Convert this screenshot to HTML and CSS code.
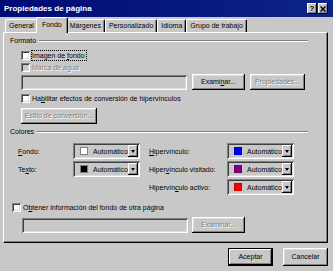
FILE: index.html
```html
<!DOCTYPE html>
<html lang="es">
<head>
<meta charset="utf-8">
<title>Propiedades de página</title>
<link rel="stylesheet" href="styles.css">
</head>
<body>
<div class="dialog">
  <header class="titlebar">
    <span class="title">Propiedades de página</span>
    <div class="caption-btns">
      <span class="cbtn help">?</span>
      <span class="cbtn close"><svg width="6" height="6" viewBox="0 0 6 6"><path d="M0.5 0.5L5.5 5.5M5.5 0.5L0.5 5.5" stroke="#000" stroke-width="1.5"/></svg></span>
    </div>
  </header>

  <nav class="tabs">
    <span class="tab">General</span>
    <span class="tab active">Fondo</span>
    <span class="tab">Márgenes</span>
    <span class="tab">Personalizado</span>
    <span class="tab">Idioma</span>
    <span class="tab">Grupo de trabajo</span>
  </nav>

  <section class="panel">
    <div class="group-head"><span>Formato</span><i class="rule"></i></div>

    <div class="check-row indent first">
      <span class="box"></span><span class="lbl focus">Imagen de <u>f</u>ondo</span>
    </div>
    <div class="check-row indent disabled">
      <span class="box dis"></span><span class="lbl">Marca de agua</span>
    </div>

    <div class="field-row indent top-field">
      <span class="field f-top"></span>
      <span class="btn b-exam">Exami<u>n</u>ar...</span>
      <span class="btn b-prop disabled">Propiedades...</span>
    </div>

    <div class="check-row indent habil">
      <span class="box"></span><span class="lbl">Ha<u>b</u>ilitar efectos de conversión de hipervínculos</span>
    </div>

    <div class="btn-row indent">
      <span class="btn b-estilo disabled">Estilo de conversión...</span>
    </div>

    <div class="group-head colores-head"><span>Colores</span><i class="rule"></i></div>

    <div class="colors">
      <span class="clabel"><u>F</u>ondo:</span>
      <span class="combo"><i class="sw sw-white"></i><span class="ctext">Automático</span><b class="drop"><i class="arrow"></i></b></span>
      <span class="clabel c2"><u>H</u>ipervínculo:</span>
      <span class="combo"><i class="sw sw-blue"></i><span class="ctext">Automático</span><b class="drop"><i class="arrow"></i></b></span>

      <span class="clabel">Te<u>x</u>to:</span>
      <span class="combo"><i class="sw sw-black"></i><span class="ctext">Automático</span><b class="drop"><i class="arrow"></i></b></span>
      <span class="clabel c2">Hiper<u>v</u>ínculo visitado:</span>
      <span class="combo"><i class="sw sw-purple"></i><span class="ctext">Automático</span><b class="drop"><i class="arrow"></i></b></span>

      <span class="clabel empty"></span>
      <span class="clabel empty"></span>
      <span class="clabel c2">Hipervín<u>c</u>ulo activo:</span>
      <span class="combo"><i class="sw sw-red"></i><span class="ctext">Automático</span><b class="drop"><i class="arrow"></i></b></span>
    </div>

    <div class="check-row obtener">
      <span class="box"></span><span class="lbl">O<u>b</u>tener información del fondo de otra página</span>
    </div>

    <div class="field-row bottom-field">
      <span class="field f-bottom"></span>
      <span class="btn b-exam2 disabled">Examinar...</span>
    </div>
  </section>

  <footer class="actions">
    <span class="btn dlg default">Aceptar</span>
    <span class="btn dlg">Cancelar</span>
  </footer>
</div>
</body>
</html>
```

FILE: styles.css
```css
html, body {
  margin: 0;
  padding: 0;
}

body {
  width: 333px;
  height: 271px;
  overflow: hidden;
  background: #c8c8c8;
  font-family: "Liberation Sans", Arial, sans-serif;
  font-size: 7px;
  color: #000;
}

.dialog {
  display: flex;
  flex-direction: column;
  width: 333px;
  height: 271px;
}

/* title bar */
.titlebar {
  height: 17px;
  flex: none;
  display: flex;
  align-items: center;
  justify-content: space-between;
  padding: 0 5px 0 4px;
  box-sizing: border-box;
  background: linear-gradient(90deg, #000a74, #0c2488);
  color: #fff;
}

.title {
  font-weight: bold;
  font-size: 8px;
  line-height: 10px;
}

.caption-btns {
  display: flex;
  gap: 1px;
}

.cbtn {
  width: 10px;
  height: 11px;
  box-sizing: border-box;
  background: #c8c8c8;
  box-shadow: inset -1px -1px #000, inset 1px 1px #fff, inset -2px -2px #808080;
  display: flex;
  align-items: center;
  justify-content: center;
  color: #000;
  font-weight: bold;
  font-size: 8px;
  line-height: 9px;
}

/* tabs */
.tabs {
  height: 15px;
  flex: none;
  display: flex;
  align-items: flex-end;
  padding-left: 5px;
  position: relative;
  z-index: 2;
}

.tab {
  height: 13px;
  box-sizing: border-box;
  padding: 0 3px;
  border-top: 1px solid #fff;
  border-left: 1px solid #fff;
  border-right: 1px solid #000;
  border-radius: 2px 2px 0 0;
  box-shadow: inset -1px 0 #808080;
  line-height: 12px;
  white-space: nowrap;
}

.tab.active {
  height: 16px;
  margin: 0 -2px -1px;
  padding: 0 5px;
  background: #c8c8c8;
  line-height: 13px;
  position: relative;
  z-index: 3;
}

/* panel */
.panel {
  height: 211px;
  flex: none;
  box-sizing: border-box;
  margin: 0 5px 0 3px;
  border-top: 1px solid #fff;
  border-left: 1px solid #fff;
  border-right: 1px solid #000;
  border-bottom: 1px solid #000;
  box-shadow: inset -1px -1px #808080;
  padding: 0 19px 0 6px;
  display: flex;
  flex-direction: column;
  position: relative;
  z-index: 1;
}

.group-head {
  margin-top: 3px;
  height: 10px;
  display: flex;
  align-items: center;
  line-height: 10px;
}

.group-head .rule {
  flex: 1;
  height: 0;
  margin-left: 3px;
  border-top: 1px solid #808080;
  border-bottom: 1px solid #fff;
}

.colores-head {
  margin-top: 3px;
}

.indent {
  margin-left: 11px;
}

.check-row {
  height: 11px;
  display: flex;
  align-items: center;
  line-height: 9px;
  white-space: nowrap;
}

.check-row.first {
  margin-top: 4px;
}

.check-row.disabled {
  margin-top: 1px;
}

.check-row.habil {
  margin-top: 3px;
}

.check-row.obtener {
  margin-top: 7px;
  margin-left: 2px;
}

.box {
  width: 9px;
  height: 9px;
  flex: none;
  box-sizing: border-box;
  background: #fff;
  box-shadow: inset 1px 1px #808080, inset -1px -1px #fff, inset 2px 2px #404040, inset -2px -2px #dcdcdc;
  margin-right: 1px;
}

.box.dis {
  background: #c8c8c8;
}

.lbl {
  border: 1px solid transparent;
  padding-right: 1px;
}

.lbl.focus {
  border: 1px dotted #000;
}

.disabled {
  color: #808080;
  text-shadow: 1px 1px 0 #fff;
}

u {
  text-decoration: underline;
  text-underline-offset: 1px;
}

/* fields and buttons */
.field-row {
  display: flex;
  align-items: center;
  height: 16px;
}

.top-field {
  margin-top: 1px;
}

.bottom-field {
  margin-top: 4px;
  margin-left: 12px;
}

.field {
  height: 15px;
  box-sizing: border-box;
  background: #c8c8c8;
  box-shadow: inset 1px 1px #808080, inset -1px -1px #fff, inset 2px 2px #404040, inset -2px -2px #dcdcdc;
}

.f-top {
  width: 166px;
  margin-right: 5px;
}

.f-bottom {
  width: 166px;
  margin-right: 4px;
}

.btn {
  height: 16px;
  box-sizing: border-box;
  display: flex;
  align-items: center;
  justify-content: center;
  background: #c8c8c8;
  box-shadow: inset -1px -1px #000, inset 1px 1px #fff, inset -2px -2px #808080, inset 2px 2px #dcdcdc;
  white-space: nowrap;
  line-height: 10px;
}

.b-exam,
.b-exam2 {
  width: 53px;
}

.b-prop {
  width: 55px;
  margin-left: 5px;
}

.btn-row {
  margin-top: 4px;
  display: flex;
}

.b-estilo {
  width: 76px;
}

/* colours grid */
.colors {
  margin-top: 6px;
  margin-left: 8px;
  display: grid;
  grid-template-columns: 55px 67px 87px 67px;
  grid-auto-rows: 16px;
  row-gap: 2px;
}

.clabel {
  display: flex;
  align-items: center;
  line-height: 9px;
  white-space: nowrap;
}

.clabel.c2 {
  padding-left: 9px;
}

.combo {
  position: relative;
  display: flex;
  align-items: center;
  box-sizing: border-box;
  padding: 2px 2px 2px 7px;
  background: #c8c8c8;
  box-shadow: inset 1px 1px #808080, inset -1px -1px #fff, inset 2px 2px #404040, inset -2px -2px #dcdcdc;
}

.sw {
  width: 8px;
  height: 8px;
  flex: none;
  box-sizing: border-box;
  border: 1px solid #808080;
}

.sw-white { background: #fff; }
.sw-black { background: #000; }
.sw-blue { background: #0000ff; border-color: #0000c0; }
.sw-purple { background: #800080; border-color: #700070; }
.sw-red { background: #ff0000; border-color: #d00000; }

.ctext {
  flex: 1;
  margin-left: 5px;
  line-height: 9px;
  white-space: nowrap;
}

.drop {
  width: 10px;
  height: 12px;
  flex: none;
  box-sizing: border-box;
  background: #c8c8c8;
  box-shadow: inset -1px -1px #000, inset 1px 1px #fff, inset -2px -2px #808080;
  display: flex;
  align-items: center;
  justify-content: center;
}

.arrow {
  width: 0;
  height: 0;
  border-left: 2.5px solid transparent;
  border-right: 2.5px solid transparent;
  border-top: 3px solid #000;
  margin-top: 1px;
}

/* dialog buttons */
.actions {
  margin-top: 5px;
  padding-right: 5px;
  display: flex;
  justify-content: flex-end;
  gap: 10px;
}

.btn.dlg {
  width: 45px;
  height: 18px;
}

.btn.default {
  box-shadow: inset 0 0 0 1px #000, inset -2px -2px #000, inset 2px 2px #fff, inset -3px -3px #808080;
}
```
